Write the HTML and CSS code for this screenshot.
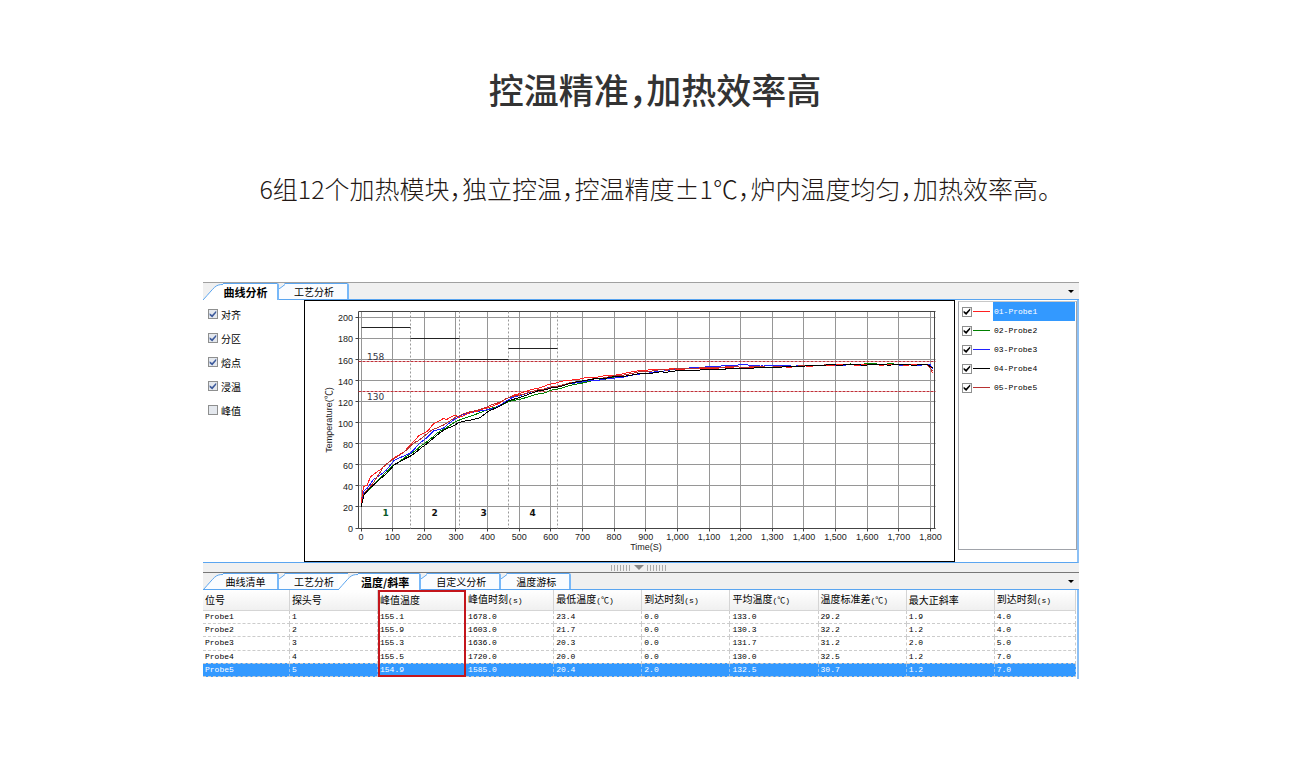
FILE: index.html
```html
<!DOCTYPE html>
<html lang="zh-CN">
<head>
    <meta charset="UTF-8">
    <meta name="viewport" content="width=device-width, initial-scale=1.0">
    <title>控温精准，加热效率高</title>
    <link rel="stylesheet" href="styles.css">
</head>
<body>

<h1>控温精准，加热效率高</h1>
<p class="intro">6组12个加热模块，独立控温，控温精度±1℃，炉内温度均匀，加热效率高。</p>

<div class="stage">
<div class="app">

    <!-- Upper tabs -->
    <div class="tabs">
        <button class="tab lead active"><svg class="slant" viewBox="0 0 20 17"><path class="cut" d="M0 0H20V1C12 1 12 5 0 17Z"/><path class="edge" d="M20 1.5C12 1.5 12 4 0 17"/></svg>曲线分析</button>
        <button class="tab"><svg class="corner" viewBox="0 0 6 6"><path class="cut" d="M0 0H6L0 6Z"/><path class="edge" d="M6 1.5L0 6"/></svg>工艺分析</button>
        <button class="more" aria-label="更多"></button>
    </div>

    <div class="analysis">
        <div class="options">
            <label><input type="checkbox" checked>对齐</label>
            <label><input type="checkbox" checked>分区</label>
            <label><input type="checkbox" checked>熔点</label>
            <label><input type="checkbox" checked>浸温</label>
            <label><input type="checkbox">峰值</label>
        </div>
        <div class="chart">
            <svg id="chart" viewBox="305 301 649 260"></svg>
        </div>
        <div class="legend">
            <label><input type="checkbox" checked><i class="line red"></i><span class="selected">01-Probe1</span></label>
            <label><input type="checkbox" checked><i class="line green"></i><span>02-Probe2</span></label>
            <label><input type="checkbox" checked><i class="line blue"></i><span>03-Probe3</span></label>
            <label><input type="checkbox" checked><i class="line black"></i><span>04-Probe4</span></label>
            <label><input type="checkbox" checked><i class="line brown"></i><span>05-Probe5</span></label>
        </div>
    </div>

    <div class="splitter"><i class="grip"></i><i class="arrow"></i><i class="grip"></i></div>

    <!-- Lower tabs -->
    <div class="tabs lower">
        <button class="tab lead"><svg class="slant" viewBox="0 0 20 17"><path class="cut" d="M0 0H20V1C12 1 12 5 0 17Z"/><path class="edge" d="M20 1.5C12 1.5 12 4 0 17"/></svg>曲线清单</button>
        <button class="tab"><svg class="corner" viewBox="0 0 6 6"><path class="cut" d="M0 0H6L0 6Z"/><path class="edge" d="M6 1.5L0 6"/></svg>工艺分析</button>
        <button class="tab lead active over"><svg class="slant" viewBox="0 0 20 17"><path class="cut" d="M10 0H20V1C16 1 13 3 10 6Z"/><path class="edge" d="M20 1.5C12 1.5 12 4 0 17"/></svg>温度/斜率</button>
        <button class="tab"><svg class="corner" viewBox="0 0 6 6"><path class="cut" d="M0 0H6L0 6Z"/><path class="edge" d="M6 1.5L0 6"/></svg>自定义分析</button>
        <button class="tab"><svg class="corner" viewBox="0 0 6 6"><path class="cut" d="M0 0H6L0 6Z"/><path class="edge" d="M6 1.5L0 6"/></svg>温度游标</button>
        <button class="more" aria-label="更多"></button>
    </div>

    <div class="results">
        <table>
            <thead>
                <tr>
                    <th class="first">位号</th>
                    <th>探头号</th>
                    <th>峰值温度</th>
                    <th>峰值时刻<span>(s)</span></th>
                    <th>最低温度<span>(℃)</span></th>
                    <th>到达时刻<span>(s)</span></th>
                    <th>平均温度<span>(℃)</span></th>
                    <th>温度标准差<span>(℃)</span></th>
                    <th>最大正斜率</th>
                    <th class="last">到达时刻<span>(s)</span></th>
                </tr>
            </thead>
            <tbody>
                <tr><td>Probe1</td><td>1</td><td>155.1</td><td>1678.0</td><td>23.4</td><td>0.0</td><td>133.0</td><td>29.2</td><td>1.9</td><td>4.0</td></tr>
                <tr><td>Probe2</td><td>2</td><td>155.9</td><td>1603.0</td><td>21.7</td><td>0.0</td><td>130.3</td><td>32.2</td><td>1.2</td><td>4.0</td></tr>
                <tr><td>Probe3</td><td>3</td><td>155.3</td><td>1636.0</td><td>20.3</td><td>0.0</td><td>131.7</td><td>31.2</td><td>2.0</td><td>5.0</td></tr>
                <tr><td>Probe4</td><td>4</td><td>155.5</td><td>1720.0</td><td>20.0</td><td>0.0</td><td>130.0</td><td>32.5</td><td>1.2</td><td>7.0</td></tr>
                <tr class="selected"><td>Probe5</td><td>5</td><td>154.9</td><td>1585.0</td><td>20.4</td><td>2.0</td><td>132.5</td><td>30.7</td><td>1.2</td><td>7.0</td></tr>
            </tbody>
        </table>
        <div class="highlight"></div>
    </div>

</div>
</div>

<script src="chart.js"></script>
</body>
</html>
```
FILE: styles.css
```css
body {
    margin: 0;
    background-color: #fff;
    color: #333;
    font-family: "Noto Sans CJK SC", sans-serif;
}

h1 {
    margin: 63px 0 0;
    font-size: 35px;
    font-weight: 500;
    line-height: 52px;
    text-align: center;
    font-feature-settings: "halt";
}

.intro {
    margin: 54px 0 0;
    color: #231815;
    font-size: 25px;
    font-weight: 300;
    line-height: 38px;
    text-align: center;
    font-feature-settings: "halt";
}

.stage {
    margin-top: 75px;
    padding-right: 28px;
}

.app {
    max-width: 876px;
    margin: 0 auto;
    color: #000;
    font-size: 10px;
}

button {
    font-family: inherit;
    color: inherit;
}

/* Tabs */
.tabs {
    display: flex;
    align-items: flex-start;
    height: 17px;
    border-top: 1px solid #a0a0a0;
    background-color: #f0f0f0;
    box-shadow: inset 0 -1px #5aa5f0;
}

.tabs.lower {
    border-top-color: #777;
}

.tab {
    position: relative;
    box-sizing: border-box;
    height: 16px;
    padding: 0 13px 0 15px;
    border: 0;
    border-top: 1px solid #5aa5f0;
    border-right: 2px solid #78b8f8;
    border-top-right-radius: 2px;
    background-color: #fafcff;
    font-size: 10px;
    line-height: 15px;
    white-space: nowrap;
}

.tab.lead {
    min-width: 76px;
    padding: 0 9px 0 20px;
}

.tab.active {
    height: 17px;
    background-color: #fff;
    font-size: 11px;
    font-weight: 700;
}

.tab.over {
    margin-left: -11px;
    padding-left: 23px;
    padding-right: 10px;
}

.tab svg {
    position: absolute;
    left: 0;
    top: -1px;
}

.slant {
    width: 20px;
    height: 17px;
}

.corner {
    width: 6px;
    height: 6px;
}

.cut {
    fill: #f0f0f0;
}

.edge {
    fill: none;
    stroke: #5aa5f0;
}

.more {
    width: 14px;
    height: 16px;
    margin-left: auto;
    padding: 0;
    border: 0;
    background: none;
}

.more::before {
    content: "";
    display: block;
    width: 0;
    margin-left: 3px;
    border: 3px solid transparent;
    border-top-color: #000;
    border-bottom: 0;
}

/* Chart area */
.analysis {
    display: grid;
    grid-template-columns: 101px 1fr 119px;
    border-right: 2px solid #8cc0f5;
    border-bottom: 1px solid #5aa5f0;
}

.options {
    padding: 2px 0 0 5px;
}

.options label {
    display: flex;
    align-items: center;
    gap: 3px;
    height: 24px;
}

input[type="checkbox"] {
    appearance: none;
    flex: none;
    display: grid;
    place-items: center;
    box-sizing: border-box;
    width: 10px;
    height: 10px;
    margin: 0;
    border: 1px solid #8e8f8f;
    background-color: #fff;
}

.options input[type="checkbox"] {
    background-color: #e4e8ee;
}

input[type="checkbox"]:checked::before {
    content: "";
    width: 8px;
    height: 8px;
    background-color: #000;
    clip-path: polygon(8% 40%, 38% 62%, 90% 8%, 90% 34%, 40% 94%, 8% 66%);
}

.options input[type="checkbox"]:checked::before {
    background-color: #3c5a9c;
}

.chart {
    margin-right: 3px;
    border: 1px solid #000;
}

.chart svg {
    display: block;
    width: 100%;
}

.legend {
    box-sizing: border-box;
    height: 249px;
    margin-top: 1px;
    border: 1px solid #a0a3aa;
    border-top-color: #c8c8c8;
    font-family: "Liberation Mono", monospace;
    font-size: 8px;
}

.legend label {
    display: flex;
    align-items: center;
    height: 19px;
    padding: 0 1px 0 3px;
}

.line {
    width: 17px;
    margin: 0 3px 0 1px;
    border-top: 1px solid;
}

.red { color: #ff2020; }
.green { color: #008000; }
.blue { color: #2020ff; }
.black { color: #000; }
.brown { color: #b83232; }

.legend span {
    flex: 1;
    padding-left: 1px;
    line-height: 19px;
}

.selected {
    background-color: #3399ff;
    color: #fff;
}

/* Splitter */
.splitter {
    display: flex;
    justify-content: center;
    align-items: center;
    gap: 2px;
    height: 9px;
    padding-right: 4px;
    background-color: #f0f0f0;
}

.grip {
    width: 22px;
    height: 6px;
    background-image: radial-gradient(circle, #aaa 35%, transparent 40%);
    background-size: 3px 2px;
}

.arrow {
    border: 5px solid transparent;
    border-top-color: #888;
    border-bottom: 0;
}

/* Results table */
.results {
    position: relative;
    border-right: 2px solid #8cc0f5;
    padding: 0 1px 2px 0;
}

table {
    width: 100%;
    height: 87px;
    border-collapse: collapse;
    table-layout: fixed;
}

th,
td {
    box-sizing: border-box;
    padding: 0 0 0 2px;
    text-align: left;
    white-space: nowrap;
}

th {
    width: 10.1%;
    height: 19px;
    border-right: 1px solid #d5d5d5;
    border-bottom: 1px solid #d5d5d5;
    background: linear-gradient(#fff, #f0f0f0);
    font-size: 10px;
    font-weight: 400;
    line-height: 18px;
}

th.first {
    width: 9.9%;
}

th.last {
    width: auto;
}

th span,
td {
    font-family: "Liberation Mono", "Noto Sans CJK SC", monospace;
    font-size: 8px;
}

td {
    height: 13px;
    border-right: 1px dashed #ccc;
    border-bottom: 1px dashed #ccc;
    line-height: 10px;
}

.selected td {
    border-right-color: #8fc0f0;
}

/* Frame round the peak temperature column */
.highlight {
    position: absolute;
    top: 0;
    bottom: 2px;
    left: 20%;
    box-sizing: border-box;
    width: 10.1%;
    border: 2px solid #c4161c;
}

/* Chart drawing */
.axis-text {
    fill: #222;
    font-family: "Liberation Sans", Arial, sans-serif;
    font-size: 9px;
}

.limit-text {
    fill: #334;
    font-family: "DejaVu Sans", sans-serif;
    font-size: 9px;
}

.zone-text {
    font-family: "DejaVu Sans", sans-serif;
    font-size: 9px;
    font-weight: 700;
}

.grid-line {
    stroke: #969696;
}

.frame-line {
    stroke: #444;
}

.zone-line {
    stroke: #999;
    stroke-dasharray: 2 2;
}

.limit-line {
    stroke: #c03038;
    stroke-dasharray: 3 1;
}

.set-line {
    stroke: #222;
}

.curve {
    fill: none;
    stroke: currentColor;
    shape-rendering: crispEdges;
}
```
FILE: chart.js
```js
const svg = document.getElementById("chart");

// Seconds and degrees to drawing units
const px = s => 361 + s * 0.3164;
const py = t => 528 - t * 1.053;

function add(tag, attrs, text) {
    const el = document.createElementNS("http://www.w3.org/2000/svg", tag);
    for (const key in attrs) el.setAttribute(key, attrs[key]);
    if (text) el.textContent = text;
    svg.appendChild(el);
}

function line(cls, x1, y1, x2, y2) {
    const snap = v => Math.floor(v) + 0.5;
    add("line", { class: cls, x1: snap(x1), y1: snap(y1), x2: snap(x2), y2: snap(y2) });
}

// Grid and axis labels
for (let t = 0; t <= 200; t += 20) {
    line("grid-line", 358, py(t), 935, py(t));
    line("frame-line", 355, py(t), 358, py(t));
    add("text", { class: "axis-text", x: 353, y: py(t) + 4, "text-anchor": "end" }, String(t));
}
for (let s = 0; s <= 1800; s += 100) {
    line("grid-line", px(s), 311, px(s), 528);
    line("frame-line", px(s), 528, px(s), 531);
    add("text", { class: "axis-text", x: px(s), y: 540, "text-anchor": "middle" }, s.toLocaleString("en-US"));
}
line("frame-line", 358, 311, 935, 311);
line("frame-line", 358, 528, 935, 528);
line("frame-line", 358, 311, 358, 528);
line("frame-line", 934, 311, 934, 528);
add("text", { class: "axis-text", x: 646, y: 550, "text-anchor": "middle" }, "Time(S)");
add("text", { class: "axis-text", transform: "translate(332 420) rotate(-90)", "text-anchor": "middle" }, "Temperature(℃)");

// Zones with their set temperature
const zones = [190, 180, 160, 170];
zones.forEach((temp, i) => {
    const start = px(i * 155);
    const end = px((i + 1) * 155);
    line("zone-line", end, 311, end, 528);
    line("set-line", start, py(temp), end, py(temp));
    add("text", { class: "zone-text", x: (start + end) / 2, y: 516, "text-anchor": "middle", fill: i === 0 ? "#0a5a28" : "#111" }, String(i + 1));
});

// Limits
line("limit-line", 358, py(158), 935, py(158));
line("limit-line", 358, py(130), 935, py(130));
add("text", { class: "limit-text", x: 367, y: 360 }, "158");
add("text", { class: "limit-text", x: 367, y: 400 }, "130");

// Probe readings
const probes = {
    green: [[0, 21], [10, 32], [50, 44], [100, 59], [155, 70], [200, 80], [240, 90], [300, 101], [350, 107], [400, 112], [470, 120], [560, 127], [620, 132], [700, 138], [818, 144], [900, 147], [1000, 149], [1155, 151], [1300, 153], [1500, 155], [1603, 156], [1800, 155], [1806, 151]],
    blue: [[0, 20], [10, 36], [20, 38], [40, 46], [80, 55], [105, 64], [155, 71], [185, 80], [230, 92], [260, 95], [300, 104], [320, 107], [350, 110], [400, 112], [430, 115], [480, 124], [560, 131], [620, 135], [700, 139], [818, 143], [900, 147], [1000, 151], [1100, 153], [1200, 155], [1350, 154], [1636, 155], [1800, 155], [1806, 151]],
    red: [[0, 23], [8, 39], [20, 41], [30, 49], [60, 55], [100, 66], [135, 72], [160, 80], [180, 87], [210, 92], [230, 99], [260, 104], [270, 103], [295, 107], [310, 105], [340, 109], [400, 114], [440, 119], [480, 126], [560, 133], [629, 139], [700, 142], [818, 146], [892, 150], [1000, 151], [1155, 152], [1350, 153], [1492, 155], [1790, 155], [1800, 152], [1806, 147]],
    brown: [[0, 20], [10, 33], [40, 43], [70, 58], [100, 65], [135, 72], [160, 79], [180, 83], [220, 92], [260, 98], [300, 105], [320, 108], [400, 115], [470, 124], [560, 131], [620, 135], [700, 140], [818, 145], [900, 149], [1000, 151], [1155, 153], [1300, 153], [1500, 155], [1790, 155], [1806, 149]],
    black: [[0, 20], [10, 32], [25, 37], [75, 50], [105, 60], [155, 68], [200, 78], [250, 91], [310, 100], [350, 103], [370, 104], [400, 110], [470, 121], [560, 130], [620, 134], [700, 140], [818, 144], [900, 147], [1000, 149], [1155, 151], [1350, 153], [1500, 155], [1790, 155], [1806, 152]]
};

for (const name in probes) {
    const points = probes[name];
    const path = [];
    for (let i = 1; i < points.length; i++) {
        const [s1, t1] = points[i - 1];
        const [s2, t2] = points[i];
        const steps = Math.max(1, Math.round((s2 - s1) / 8));
        for (let k = 0; k < steps; k++) {
            const s = s1 + (s2 - s1) * k / steps;
            const t = t1 + (t2 - t1) * k / steps + Math.sin(s * 0.7 + name.length) * 0.3;
            path.push(px(s).toFixed(1) + "," + py(t).toFixed(1));
        }
    }
    const last = points[points.length - 1];
    path.push(px(last[0]).toFixed(1) + "," + py(last[1]).toFixed(1));
    add("polyline", { class: "curve " + name, points: path.join(" ") });
}
```
